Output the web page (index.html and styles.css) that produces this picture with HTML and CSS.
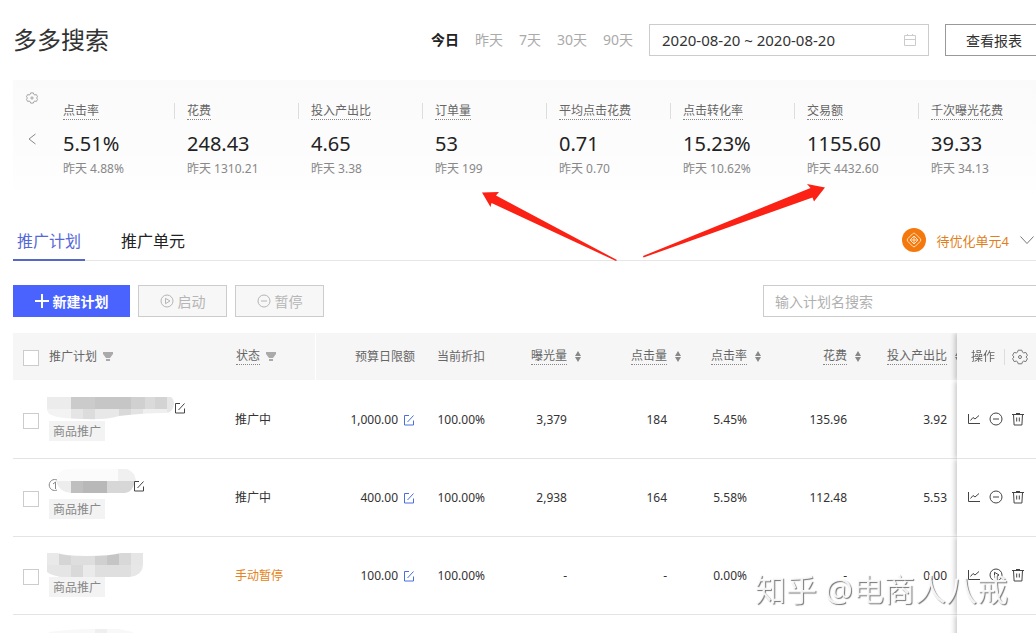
FILE: index.html
```html
<!DOCTYPE html>
<html lang="zh-CN">
<head>
<meta charset="utf-8">
<title>多多搜索</title>
<link rel="stylesheet" href="styles.css">
</head>
<body>
<svg class="sprite" aria-hidden="true">
  <symbol id="gear" viewBox="0 0 16 16"><path d="M6.2 1.2h3.6l.7 2 1.2.7 2.1-.5 1.6 2.9-1.4 1.7 1.4 1.7-1.6 2.9-2.1-.5-1.2.7-.7 2H6.200l-.7-2-1.200-.7-2.100.5L.6 9.700 2 8 .6 6.300l1.600-2.900 2.100.5 1.200-.7z"/><circle cx="8" cy="8" r="1.500"/></symbol>
  <symbol id="filter" viewBox="0 0 10 10"><path d="M0 0h10v2L7 6H3L0 2zM3 7h4v2H3z"/></symbol>
  <symbol id="sort" viewBox="0 0 6 11"><path d="M3 0 6 5H0zM0 6h6l-3 5z"/></symbol>
  <symbol id="edit" viewBox="0 0 12 12"><path d="M6 1.500H1.500v9.500h9V6.500M4.500 8 10.500 1.500"/></symbol>
  <symbol id="chart" viewBox="0 0 12 12"><path d="M.5 1v9.500h11.500M2.500 7.500l2.500-3 2 1.500 4-3.500"/></symbol>
  <symbol id="minus" viewBox="0 0 14 14"><circle cx="7" cy="7" r="6"/><path d="M4 7h6"/></symbol>
  <symbol id="play" viewBox="0 0 14 14"><circle cx="7" cy="7" r="6"/><path d="M5.500 4.300 10 7 5.500 9.700z"/></symbol>
  <symbol id="trash" viewBox="0 0 12 14"><path d="M0 2.500h12M4 1.500h4M1.500 2.500l.6 10.500h7.800l.6-10.500M4.700 5.500v4M7.300 5.500v4"/></symbol>
</svg>

<main class="page">
  <header class="top">
    <h1 class="title">多多搜索</h1>
    <nav class="ranges">
      <a href="#" class="range range-on">今日</a>
      <a href="#" class="range">昨天</a>
      <a href="#" class="range">7天</a>
      <a href="#" class="range">30天</a>
      <a href="#" class="range">90天</a>
    </nav>
    <div class="date">
      <input class="date-input" type="text" readonly aria-label="日期范围" value="2020-08-20 ~ 2020-08-20">
      <svg class="calendar" viewBox="0 0 12 12"><path d="M.5 1.500h11v10H.5zM.5 5.500h11M3.500 0v1.500M8.500 0v1.500"/></svg>
    </div>
    <button class="report">查看报表</button>
  </header>

  <section class="stats">
    <div class="stats-side">
      <button class="plain" aria-label="设置"><svg class="line i12"><use href="#gear"/></svg></button>
      <button class="plain" aria-label="上一页"><svg class="prev" viewBox="0 0 8 12"><path d="M7.500 1 1 6l6.500 5"/></svg></button>
    </div>
    <dl class="stat"><dt><span class="dotted">点击率</span></dt><dd class="value">5.51%</dd><dd class="before">昨天 4.88%</dd></dl>
    <dl class="stat"><dt><span class="dotted">花费</span></dt><dd class="value">248.43</dd><dd class="before">昨天 1310.21</dd></dl>
    <dl class="stat"><dt><span class="dotted">投入产出比</span></dt><dd class="value">4.65</dd><dd class="before">昨天 3.38</dd></dl>
    <dl class="stat"><dt><span class="dotted">订单量</span></dt><dd class="value">53</dd><dd class="before">昨天 199</dd></dl>
    <dl class="stat"><dt><span class="dotted">平均点击花费</span></dt><dd class="value">0.71</dd><dd class="before">昨天 0.70</dd></dl>
    <dl class="stat"><dt><span class="dotted">点击转化率</span></dt><dd class="value">15.23%</dd><dd class="before">昨天 10.62%</dd></dl>
    <dl class="stat"><dt><span class="dotted">交易额</span></dt><dd class="value">1155.60</dd><dd class="before">昨天 4432.60</dd></dl>
    <dl class="stat"><dt><span class="dotted">千次曝光花费</span></dt><dd class="value">39.33</dd><dd class="before">昨天 34.13</dd></dl>
  </section>

  <div class="tabs">
    <a href="#" class="tab tab-on">推广计划</a>
    <a href="#" class="tab">推广单元</a>
    <button class="optimize">
      <svg class="badge" viewBox="0 0 24 24"><circle cx="12" cy="12" r="12" fill="#f5780c"/><g fill="none" stroke="#ffe2c4"><path d="M12 5.200q.8 0 1.400.6l4.800 4.800q1.400 1.400 0 2.800l-4.800 4.800q-1.400 1.400-2.800 0l-4.800-4.800q-1.400-1.400 0-2.800l4.800-4.800q.6-.6 1.400-.6z"/><path d="m12 8 4 4-4 4-4-4zM12 9v6M9 12h6"/></g></svg>
      <span>待优化单元4</span>
      <svg class="down" viewBox="0 0 14 8"><path d="m.5.5 6.500 7 6.500-7"/></svg>
    </button>
  </div>

  <div class="toolbar">
    <button class="create"><svg class="plus" viewBox="0 0 14 14"><path d="M7 0v14M0 7h14"/></svg>新建计划</button>
    <button class="action" disabled><svg class="line i14"><use href="#play"/></svg>启动</button>
    <button class="action" disabled><svg class="line i14"><use href="#minus"/></svg>暂停</button>
    <input class="search" type="text" placeholder="输入计划名搜索" aria-label="输入计划名搜索">
  </div>

  <table class="plans">
    <colgroup><col class="c-check"><col class="c-name"><col class="c-status"><col class="c-budget"><col class="c-discount"><col class="c-shows"><col class="c-wide"><col class="c-rate"><col class="c-wide"><col class="c-roi"><col class="c-ops"></colgroup>
    <thead>
      <tr>
        <th class="check"><input type="checkbox" aria-label="全选"></th>
        <th class="name"><div class="head"><span>推广计划</span><svg class="filter"><use href="#filter"/></svg></div></th>
        <th class="status"><div class="head"><span class="dotted">状态</span><svg class="filter"><use href="#filter"/></svg></div></th>
        <th class="num">预算日限额</th>
        <th class="num">当前折扣</th>
        <th class="sortable"><div class="head"><span class="dotted">曝光量</span><svg class="sort"><use href="#sort"/></svg></div></th>
        <th class="sortable"><div class="head"><span class="dotted">点击量</span><svg class="sort"><use href="#sort"/></svg></div></th>
        <th class="sortable"><div class="head"><span class="dotted">点击率</span><svg class="sort"><use href="#sort"/></svg></div></th>
        <th class="sortable"><div class="head"><span class="dotted">花费</span><svg class="sort"><use href="#sort"/></svg></div></th>
        <th class="sortable roi"><div class="head"><span class="dotted">投入产出比</span><svg class="sort"><use href="#sort"/></svg></div></th>
        <th class="ops"><div class="ops-head"><span>操作</span><button class="plain setting" aria-label="列设置"><svg class="line i16"><use href="#gear"/></svg></button></div></th>
      </tr>
    </thead>
    <tbody>
      <tr>
        <td class="check"><input type="checkbox" aria-label="选择计划 1"></td>
        <td class="name">
          <div class="plan">
            <svg class="mask mask-long" viewBox="0 0 127 32">
              <clipPath id="m1"><path d="M0 8h124q3 2 3 7-1 9-9 9-22 0-46 3-14 4-32 3-24 0-33-3-8-2-7-9z"/></clipPath>
              <g clip-path="url(#m1)">
                <path fill="#ececec" d="M0 8h24v12H0z"/><path fill="#cbcbcb" d="M24 8h24v12H24z"/><path fill="#c6c6c6" d="M48 8h36v12H48z"/><path fill="#d0d0d0" d="M84 8h14v12H84z"/><path fill="#dadada" d="M98 8h10v12H98z"/><path fill="#d3d3d3" d="M108 8h12v12h-12z"/><path fill="#e6e6e6" d="M120 8h7v16h-7z"/>
                <path fill="#f3f3f3" d="M0 20h24v12H0z"/><path fill="#e5e5e5" d="M24 20h12v12H24z"/><path fill="#dcdcdc" d="M36 20h12v12H36z"/><path fill="#e8e8e8" d="M48 20h24v12H48z"/><path fill="#d9d9d9" d="M72 20h12v12H72z"/><path fill="#e3e3e3" d="M84 20h12v12H84z"/><path fill="#efefef" d="M96 20h24v12H96z"/>
              </g>
            </svg>
            <button class="plain" aria-label="编辑名称"><svg class="line i12"><use href="#edit"/></svg></button>
          </div>
          <span class="tag">商品推广</span>
        </td>
        <td class="status">推广中</td>
        <td class="num budget">1,000.00<button class="plain blue" aria-label="编辑预算"><svg class="line i12"><use href="#edit"/></svg></button></td>
        <td class="num">100.00%</td>
        <td class="sortable">3,379</td>
        <td class="sortable">184</td>
        <td class="sortable">5.45%</td>
        <td class="sortable">135.96</td>
        <td class="sortable roi">3.92</td>
        <td class="ops"><div class="icons"><button class="plain" aria-label="报表"><svg class="line i12"><use href="#chart"/></svg></button><button class="plain" aria-label="暂停"><svg class="line i14"><use href="#minus"/></svg></button><button class="plain" aria-label="删除"><svg class="line bin"><use href="#trash"/></svg></button></div></td>
      </tr>
      <tr>
        <td class="check"><input type="checkbox" aria-label="选择计划 2"></td>
        <td class="name">
          <div class="plan">
            <svg class="mask mask-short" viewBox="0 0 86 32">
              <path d="M10 13A5.500 5.500 0 1 0 10 23M6 17l2.500-2v7" fill="none" stroke="#888"/>
              <path fill="#fbfbfb" d="M10 14Q10 4 20 2h51v12z"/><path fill="#f0f0f0" d="M71 2h9q8 3 9 12H71z"/>
              <path fill="#ededed" d="M9 14h15v12Q12 25 9 14z"/><path fill="#bfbfbf" d="M24 14h12v12H24z"/><path fill="#b8b8b8" d="M36 14h24v12H36z"/><path fill="#d7d7d7" d="M60 14h28q-2 11-10 12H60z"/>
            </svg>
            <button class="plain" aria-label="编辑名称"><svg class="line i12"><use href="#edit"/></svg></button>
          </div>
          <span class="tag">商品推广</span>
        </td>
        <td class="status">推广中</td>
        <td class="num budget">400.00<button class="plain blue" aria-label="编辑预算"><svg class="line i12"><use href="#edit"/></svg></button></td>
        <td class="num">100.00%</td>
        <td class="sortable">2,938</td>
        <td class="sortable">164</td>
        <td class="sortable">5.58%</td>
        <td class="sortable">112.48</td>
        <td class="sortable roi">5.53</td>
        <td class="ops"><div class="icons"><button class="plain" aria-label="报表"><svg class="line i12"><use href="#chart"/></svg></button><button class="plain" aria-label="暂停"><svg class="line i14"><use href="#minus"/></svg></button><button class="plain" aria-label="删除"><svg class="line bin"><use href="#trash"/></svg></button></div></td>
      </tr>
      <tr>
        <td class="check"><input type="checkbox" aria-label="选择计划 3"></td>
        <td class="name">
          <div class="plan">
            <svg class="mask mask-mid" viewBox="0 0 96 32">
              <clipPath id="m3"><path d="M0 8h10q8 3 30 3 24 0 34-3h22v12q-1 11-14 12H58q-6 3-24 2Q8 33 0 27z"/></clipPath>
              <g clip-path="url(#m3)">
                <path fill="#e9e9e9" d="M0 8h12v12H0z"/><path fill="#d5d5d5" d="M12 8h12v12H12z"/><path fill="#dedede" d="M24 8h24v12H24z"/><path fill="#d0d0d0" d="M48 8h12v12H48z"/><path fill="#c5c5c5" d="M60 8h12v12H60z"/><path fill="#d8d8d8" d="M72 8h12v12H72z"/><path fill="#e6e6e6" d="M84 8h12v12H84z"/>
                <path fill="#e5e5e5" d="M0 20h24v15H0z"/><path fill="#d9d9d9" d="M24 20h12v15H24z"/><path fill="#eaeaea" d="M36 20h12v15H36z"/><path fill="#dfdfdf" d="M48 20h36v15H48z"/><path fill="#e7e7e7" d="M84 20h12v15H84z"/>
              </g>
            </svg>
          </div>
          <span class="tag">商品推广</span>
        </td>
        <td class="status paused">手动暂停</td>
        <td class="num budget">100.00<button class="plain blue" aria-label="编辑预算"><svg class="line i12"><use href="#edit"/></svg></button></td>
        <td class="num">100.00%</td>
        <td class="sortable">-</td>
        <td class="sortable">-</td>
        <td class="sortable">0.00%</td>
        <td class="sortable">-</td>
        <td class="sortable roi">0.00</td>
        <td class="ops"><div class="icons"><button class="plain" aria-label="报表"><svg class="line i12"><use href="#chart"/></svg></button><button class="plain" aria-label="启动"><svg class="line i14"><use href="#play"/></svg></button><button class="plain" aria-label="删除"><svg class="line bin"><use href="#trash"/></svg></button></div></td>
      </tr>
      <tr>
        <td></td>
        <td class="name">
          <div class="plan">
            <svg class="mask mask-mid" viewBox="0 0 96 32"><path fill="#f8f8f8" d="M2 9q20-3 46-3h24l14 3v16H2z"/><path fill="#efefef" d="M48 6h12v14H48z"/></svg>
          </div>
        </td>
        <td></td><td></td><td></td><td></td><td></td><td></td><td></td><td></td>
        <td class="ops"></td>
      </tr>
    </tbody>
  </table>

  <svg class="arrows" viewBox="480 180 350 84" aria-hidden="true">
    <path d="M482 192.500 499 192l-3 3.500L617 260l-1 1-124.500-58-1 4z"/>
    <path d="m825 187.500-18-3.500 3.500 4L643 256l.5 1.500 169-60 1.500 4z"/>
  </svg>
  <div class="watermark">知乎 @电商人八戒</div>
</main>
</body>
</html>
```

FILE: styles.css
```css
* { box-sizing: border-box; }
html { height: 100%; overflow: hidden; }
body {
  height: 100%;
  margin: 0;
  overflow: hidden;
  background: #fff;
  color: #333;
  font: 12px/16px "Noto Sans", "Noto Sans CJK SC", sans-serif;
}
button, input { font-family: inherit; border-radius: 0; }
a { text-decoration: none; }
svg { display: block; flex: none; }
.sprite { position: absolute; width: 0; height: 0; }
.page { position: relative; padding-left: 13px; }

.line { fill: none; stroke: currentColor; stroke-width: 1; overflow: visible; }
.i12 { width: 12px; height: 12px; }
.i14 { width: 14px; height: 14px; }
.i16 { width: 16px; height: 16px; }
.bin { width: 12px; height: 14px; }
.plain { padding: 0; border: 0; background: none; color: #444; }
.dotted { border-bottom: 1px dotted #888; }

/* heading and date range */
.top { display: flex; align-items: center; height: 80px; padding-bottom: 1px; }
.title { margin: 0; font-size: 24px; line-height: 32px; font-weight: 400; }
.ranges { display: flex; gap: 16px; margin-left: auto; }
.range { color: #aaa; font-size: 14px; line-height: 20px; }
.range-on { color: #222; font-weight: 700; }
.date {
  display: flex;
  align-items: center;
  width: 280px;
  height: 32px;
  margin-left: 16px;
  padding: 0 12px;
  border: 1px solid #ccc;
}
.date-input { flex: 1; min-width: 0; padding: 0; border: 0; outline: 0; color: #333; font-size: 15px; }
.calendar { width: 12px; height: 12px; fill: none; stroke: #ccc; }
.report {
  height: 32px;
  margin-left: 16px;
  padding: 0 14px 0 20px;
  border: 1px solid #999;
  border-right: 0;
  background: #fff;
  color: #333;
  font-size: 14px;
}

/* key figures */
.stats { display: flex; height: 120px; overflow: hidden; background: linear-gradient(#fafafa, #fdfdfd 75%, #fff); }
.stats-side { display: flex; flex: none; flex-direction: column; align-items: center; gap: 29px; width: 37px; padding-top: 12px; }
.stats-side .plain { color: #888; }
.prev { width: 8px; height: 12px; fill: none; stroke: #888; }
.stat { flex: 1 0 124px; margin: 0; padding-top: 23px; }
.stat dt { padding-left: 12px; border-left: 1px solid #ddd; color: #666; line-height: 16px; }
.stats-side + .stat dt { border-color: transparent; }
.stat dd { margin: 0; padding-left: 13px; }
.value { padding-top: 11px; color: #222; font-size: 20px; line-height: 28px; }
.before { padding-top: 3px; color: #888; line-height: 16px; }

/* tabs */
.tabs { display: flex; align-items: center; gap: 32px; height: 61px; padding-top: 20px; border-bottom: 1px solid #e6e6e6; }
.tab { height: 41px; padding: 0 4px; color: #222; font-size: 16px; line-height: 42px; }
.tab-on { border-bottom: 2px solid #5568c8; color: #5568d8; }
.optimize {
  display: flex;
  align-items: center;
  gap: 11px;
  margin-left: auto;
  padding: 0 2px 0 0;
  border: 0;
  background: none;
  color: #e27f1c;
  font-size: 13px;
}
.badge { width: 24px; height: 24px; }
.down { width: 14px; height: 8px; fill: none; stroke: #777; }

/* toolbar */
.toolbar { display: flex; gap: 8px; padding: 24px 0 16px; }
.create, .action { display: flex; align-items: center; justify-content: center; gap: 4px; height: 32px; padding: 0; font-size: 14px; }
.create { width: 117px; border: 0; background: #4a63ff; color: #fff; font-weight: 700; }
.plus { width: 14px; height: 14px; stroke: #fff; stroke-width: 2; }
.action { width: 89px; border: 1px solid #ccc; background: #f7f7f7; color: #b5b5b5; }
.search {
  width: 273px;
  height: 32px;
  margin-left: auto;
  padding: 0 11px;
  border: 1px solid #ccc;
  border-right: 0;
  outline: 0;
  font-size: 14px;
}
.search::placeholder { color: #b0b0b0; }

/* plan table */
.plans { width: 100%; table-layout: fixed; border-collapse: separate; border-spacing: 0; }
.c-check { width: 34px; }
.c-status { width: 81px; }
.c-budget { width: 109px; }
.c-discount { width: 70px; }
.c-shows { width: 92px; }
.c-wide { width: 100px; }
.c-rate { width: 80px; }
.c-roi { width: 90px; }
.c-ops { width: 79px; }
.plans th { height: 48px; padding: 0; border-bottom: 1px solid #fff; background: #f6f6f6; color: #666; font-weight: 400; text-align: left; }
.plans td { height: 78px; padding: 0; border-bottom: 1px solid #e4e4e4; }
.plans .check { padding-left: 10px; }
.check input { display: block; width: 16px; height: 16px; margin: 2px 0 0; appearance: none; border: 1px solid #ccc; background: #fff; }
.plans th.name { padding-left: 2px; }
.plans th.status { padding-left: 1px; border-right: 1px solid #fff; }
.head { display: flex; align-items: center; gap: 6px; white-space: nowrap; }
.filter { width: 10px; height: 10px; fill: #aaa; }
.sort { width: 6px; height: 11px; fill: #888; }
.plans .num { padding-right: 10px; text-align: right; }
.plans .sortable { padding-right: 20px; text-align: right; }
.plans .roi { padding-right: 10px; }
.sortable .head { justify-content: flex-end; gap: 8px; }
.sortable .sort { margin-right: -14px; }
.plans td.name { vertical-align: top; padding-top: 8px; }
.plan { display: flex; align-items: center; height: 32px; }
.plan .plain { padding-top: 5px; }
.mask { height: 32px; overflow: visible; }
.mask-long { width: 127px; }
.mask-short { width: 86px; }
.mask-mid { width: 96px; }
.tag { display: inline-block; margin-left: 2px; padding: 3px 4px 1px; background: #f3f3f3; color: #888; }
.plans .paused { color: #e58320; }
.plans .blue { margin-left: 5px; color: #4a6fdc; vertical-align: middle; }
.plans .ops { position: sticky; right: 0; z-index: 1; box-shadow: -2px 0 5px rgba(0, 0, 0, .22); clip-path: inset(0 0 0 -10px); }
.plans td.ops { background: #fff; }
.ops-head { display: flex; align-items: center; justify-content: space-between; padding: 0 8px 0 14px; }
.setting { padding: 0 0 0 7px; border-left: 1px solid #ddd; color: #777; }
.icons { display: flex; align-items: center; gap: 9px; padding: 0 0 2px 11px; }

/* annotations lying over the page */
.arrows { position: absolute; left: 480px; top: 180px; z-index: 2; width: 350px; height: 84px; fill: #fb2114; }
.watermark {
  position: absolute;
  left: 755px;
  top: 569px;
  z-index: 2;
  color: rgba(255, 255, 255, .9);
  font-size: 31px;
  line-height: 40px;
  white-space: nowrap;
  text-shadow: 1px 1px 1px #777;
}
```
